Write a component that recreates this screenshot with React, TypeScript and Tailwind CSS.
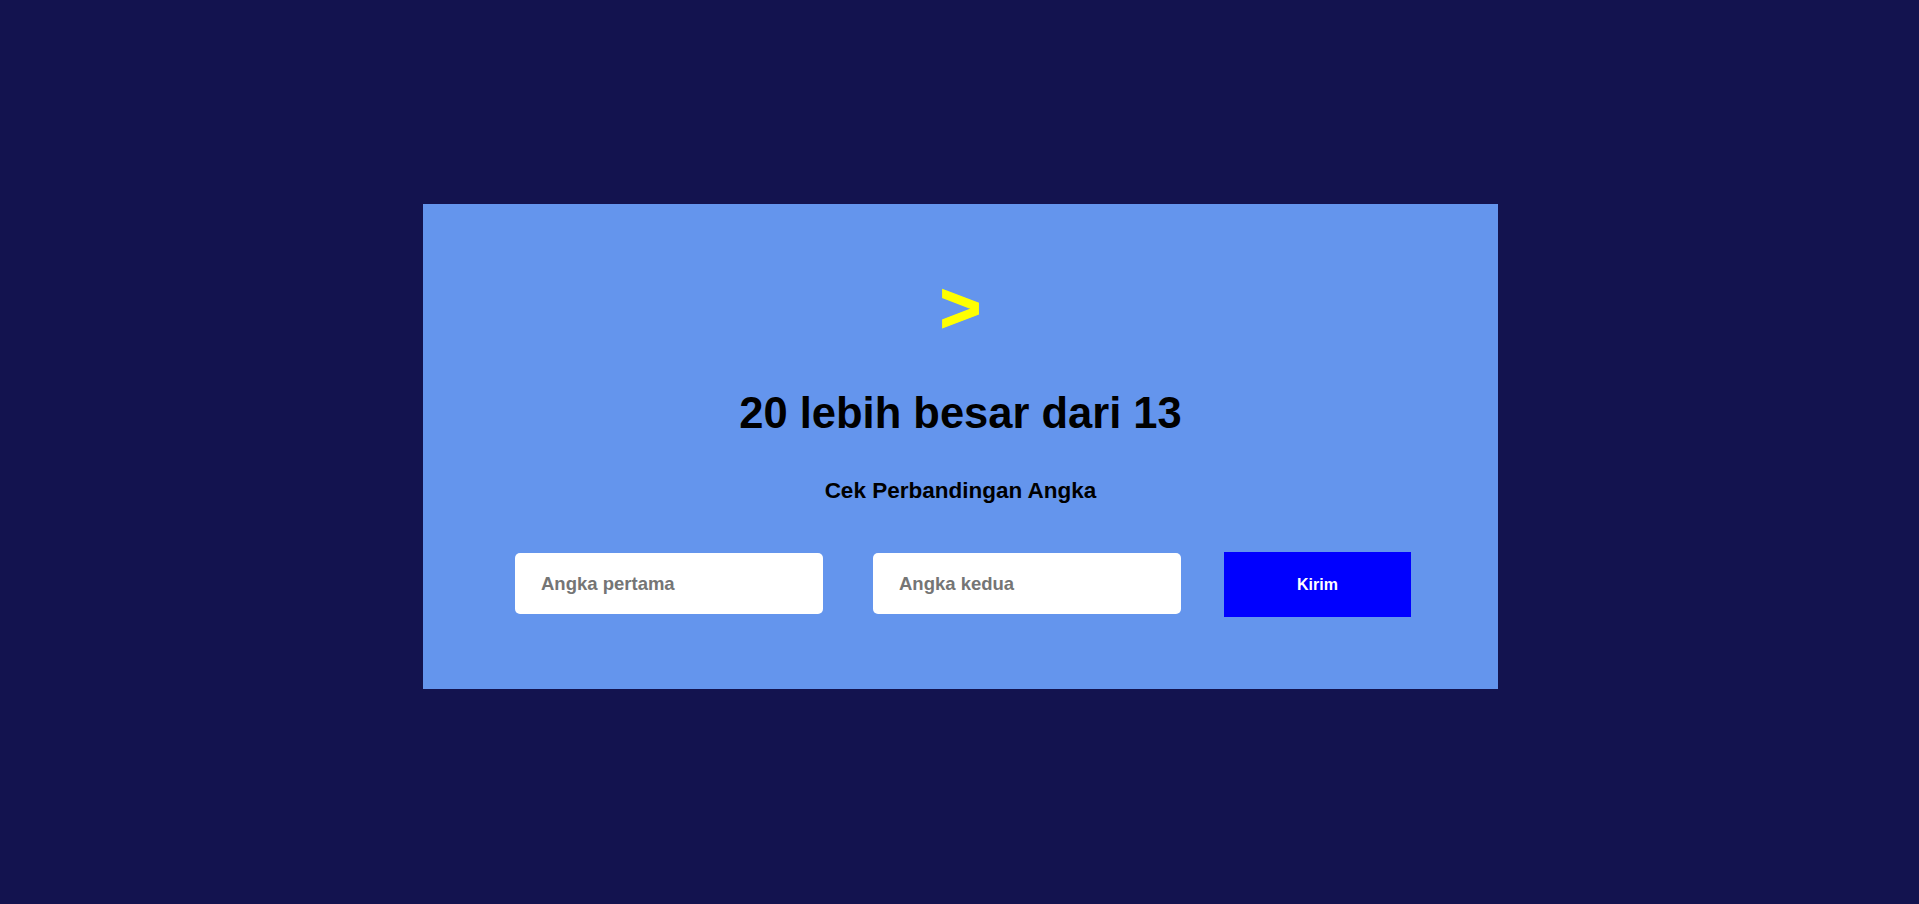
export default function App() {
  return (
    <div
      className="min-h-[904px] w-full bg-[#13134f] flex justify-center items-start pt-[204px] pl-[2px]"
      style={{ fontFamily: '"Liberation Sans", Arial, sans-serif' }}
    >
      <div className="w-[1075px] bg-[#6495ed] flex flex-col items-center pt-[68px] pb-[72px]">
        <div className="h-[71px] text-[71px] leading-none font-bold text-[#ffff00] [-webkit-text-stroke:1.2px_#ffff00]">&gt;</div>
        <h1 className="mt-[48px] h-[44px] text-[43.5px] leading-[44px] font-bold text-black">20 lebih besar dari 13</h1>
        <h2 className="mt-[45px] h-[22px] text-[22.5px] leading-[22px] font-bold text-black">Cek Perbandingan Angka</h2>
        <div className="mt-[48px] flex items-center justify-center h-[67px] pl-[5px]">
          <input
            type="text"
            placeholder="Angka pertama"
            className="w-[308px] h-[61px] rounded-[5px] bg-white pl-[26px] text-[18.5px] font-bold text-black placeholder:text-[#757575] outline-none"
          />
          <input
            type="text"
            placeholder="Angka kedua"
            className="ml-[50px] w-[308px] h-[61px] rounded-[5px] bg-white pl-[26px] text-[18.5px] font-bold text-black placeholder:text-[#757575] outline-none"
          />
          <button className="ml-[43px] mt-[2px] w-[187px] h-[65px] bg-[#0000ff] text-white font-bold text-[16px]">
            Kirim
          </button>
        </div>
      </div>
    </div>
  );
}
